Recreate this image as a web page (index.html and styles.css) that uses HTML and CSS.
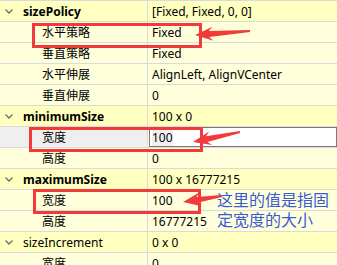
FILE: index.html
```html
<!DOCTYPE html>
<html lang="zh">
<head>
    <meta charset="UTF-8">
    <title>属性编辑器</title>
    <link rel="stylesheet" href="styles.css">
</head>
<body>

    <div class="props">
        <div class="row group">
            <div class="name"><span class="chev"><svg width="8" height="5" viewBox="0 0 8 5"><polyline points="0.5,0.5 4,4 7.5,0.5" fill="none" stroke="#6a6a6a" stroke-width="1.3"/></svg></span>sizePolicy</div>
            <div class="val">[Fixed, Fixed, 0, 0]</div>
        </div>
        <div class="row sub">
            <div class="name">水平策略</div>
            <div class="val">Fixed</div>
        </div>
        <div class="row sub">
            <div class="name">垂直策略</div>
            <div class="val">Fixed</div>
        </div>
        <div class="row sub">
            <div class="name">水平伸展</div>
            <div class="val">AlignLeft, AlignVCenter</div>
        </div>
        <div class="row sub">
            <div class="name">垂直伸展</div>
            <div class="val">0</div>
        </div>

        <div class="row group">
            <div class="name"><span class="chev"><svg width="8" height="5" viewBox="0 0 8 5"><polyline points="0.5,0.5 4,4 7.5,0.5" fill="none" stroke="#6a6a6a" stroke-width="1.3"/></svg></span>minimumSize</div>
            <div class="val">100 x 0</div>
        </div>
        <div class="row sub editing">
            <div class="name">宽度</div>
            <div class="val"><div class="editor"><span class="sel">100</span></div></div>
        </div>
        <div class="row sub">
            <div class="name">高度</div>
            <div class="val">0</div>
        </div>

        <div class="row group">
            <div class="name"><span class="chev"><svg width="8" height="5" viewBox="0 0 8 5"><polyline points="0.5,0.5 4,4 7.5,0.5" fill="none" stroke="#6a6a6a" stroke-width="1.3"/></svg></span>maximumSize</div>
            <div class="val">100 x 16777215</div>
        </div>
        <div class="row sub">
            <div class="name">宽度</div>
            <div class="val">100</div>
        </div>
        <div class="row sub">
            <div class="name">高度</div>
            <div class="val">16777215</div>
        </div>

        <div class="row group plain">
            <div class="name"><span class="chev"><svg width="8" height="5" viewBox="0 0 8 5"><polyline points="0.5,0.5 4,4 7.5,0.5" fill="none" stroke="#6a6a6a" stroke-width="1.3"/></svg></span>sizeIncrement</div>
            <div class="val">0 x 0</div>
        </div>
        <div class="row sub">
            <div class="name">宽度</div>
            <div class="val">0</div>
        </div>
    </div>

    <!-- annotations drawn over the table -->
    <div class="mark mark1"></div>
    <div class="mark mark2"></div>
    <div class="mark mark3"></div>

    <svg class="arrows" width="337" height="265" viewBox="0 0 337 265">
        <polygon points="195,35 213.5,40.7 209.2,37 250.1,32 249.9,30 208.8,31 212.5,26.7" fill="#f23a3a"/>
        <polygon points="193,142 212.1,145.1 207.3,142 240.2,133 239.8,131 206.1,136.2 209.1,131.4" fill="#f23a3a"/>
        <polygon points="183,202 201.9,206.2 197.3,202.8 222.2,197 221.8,195 196.4,196.9 199.7,192.3" fill="#f23a3a"/>
    </svg>

    <div class="note">这里的值是指固<br>定宽度的大小</div>

</body>
</html>
```

FILE: styles.css
```css
body {
    margin: 0;
    width: 337px;
    height: 265px;
    overflow: hidden;
    position: relative;
    background-color: #fff;
    font-family: "Noto Sans", "Noto Sans CJK SC", sans-serif;
    font-size: 12px;
    color: #000;
}

.props {
    border-top: 1px solid #dadada;
}

.row {
    display: grid;
    grid-template-columns: 148px 1fr;
    height: 20px;
    border-bottom: 1px solid #dadada;
    background-color: #ffffdc;
}

.row.group {
    background-color: #ffffbf;
}

.name, .val {
    display: flex;
    align-items: center;
    white-space: nowrap;
    overflow: hidden;
}

.name {
    border-right: 1px solid #dadada;
}

.val {
    padding-left: 4px;
}

.group .name {
    font-weight: bold;
    padding-left: 5px;
}

.group.plain .name {
    font-weight: normal;
}

.chev {
    display: inline-flex;
    width: 18px;
    align-items: center;
}

.sub .name {
    padding-left: 42px;
}

.editing .name {
    background-color: #efefef;
}

.editing .val {
    padding-left: 1px;
    align-items: stretch;
}

.editor {
    flex: 1;
    display: flex;
    align-items: center;
    background-color: #fff;
    border: 1px solid #7a7a7a;
    border-top-width: 2px;
    margin-top: -1px;
    padding-left: 2px;
}

.sel {
    background-color: #f0f0f0;
}

.mark {
    position: absolute;
    border: 3px solid #f23a3a;
    box-sizing: border-box;
}

.mark1 {
    left: 32px;
    top: 23px;
    width: 170px;
    height: 25px;
}

.mark2 {
    left: 29px;
    top: 127px;
    width: 174px;
    height: 25px;
}

.mark3 {
    left: 33px;
    top: 189px;
    width: 168px;
    height: 25px;
}

.arrows {
    position: absolute;
    left: 0;
    top: 0;
}

.note {
    position: absolute;
    left: 217px;
    top: 189px;
    font-family: "Noto Sans CJK SC", sans-serif;
    font-size: 16px;
    line-height: 20px;
    color: #3a5bd6;
}
```
